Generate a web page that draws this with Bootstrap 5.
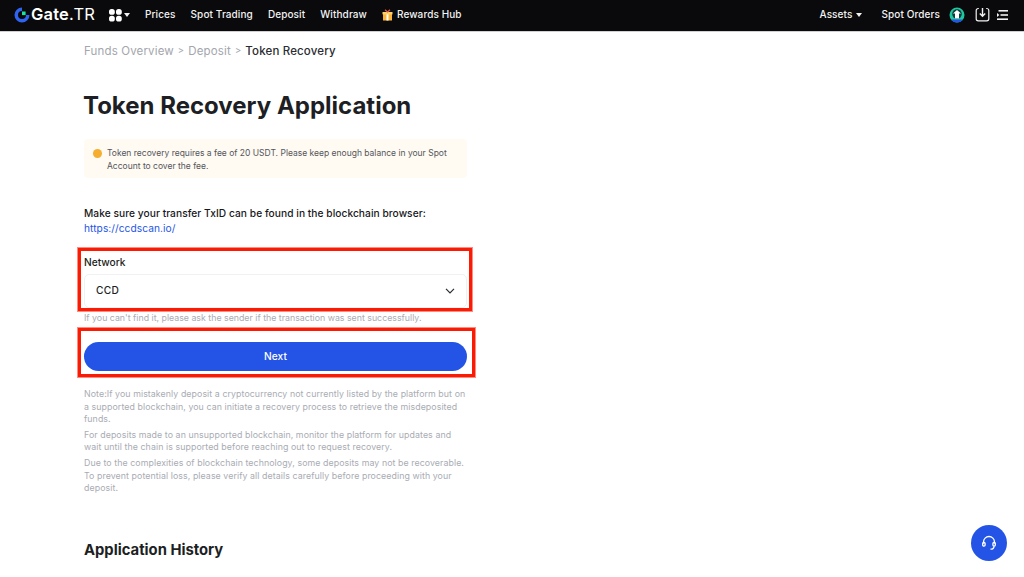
<!DOCTYPE html>
<html lang="en">
  <head>
    <meta charset="UTF-8" />
    <meta name="viewport" content="width=device-width, initial-scale=1.0" />
    <title>Token Recovery</title>
    <link
      href="https://cdn.jsdelivr.net/npm/bootstrap@5.3.5/dist/css/bootstrap.min.css"
      rel="stylesheet"
    />
    <style>
      html,
      body {
        height: 577px;
        overflow: hidden;
      }

      body {
        background: #fff;
        font-family: "Inter", "Liberation Sans", sans-serif;
        color: #1d1f24;
      }

      .top-bar {
        height: 32px;
        background: #0a0a0c;
        color: #f2f2f2;
        font-size: 10px;
        font-weight: 500;
        letter-spacing: 0.1px;
        padding: 0 16px 2px 14px;
        border-bottom: 1px solid #d0d0d0;
      }

      .brand-name {
        font-size: 16.5px;
        font-weight: 600;
        letter-spacing: 0.2px;
        color: #fff;
        margin-left: 1px;
        width: 64px;
      }

      .brand-name span {
        font-weight: 400;
      }

      .nav-left {
        gap: 15px;
      }

      .apps-menu {
        margin-left: -2px;
        gap: 1px;
      }

      .caret-down {
        display: inline-block;
        border-left: 3px solid transparent;
        border-right: 3px solid transparent;
        border-top: 4px solid #f2f2f2;
      }

      .spot-orders {
        margin: 0 9px 0 19px;
      }

      .download-icon {
        margin: 0 7px 0 10px;
      }

      .page-body {
        width: 383px;
        margin-left: 84px;
      }

      .crumbs {
        padding-top: 12px;
        font-size: 11.5px;
        line-height: 14px;
        color: #a3a6ad;
        letter-spacing: 0.15px;
        gap: 4px;
      }

      .crumb-sep {
        font-size: 9.5px;
      }

      .crumbs b {
        font-weight: 500;
        color: #2a2c31;
      }

      .page-title {
        font-size: 24px;
        font-weight: 700;
        line-height: 28px;
        margin: 34px 0 19px -1px;
        letter-spacing: 0;
      }

      .fee-note {
        background: #fffaf2;
        border-radius: 4px;
        padding: 8px 12px 5px 9px;
        font-size: 8.5px;
        line-height: 13px;
        color: #54565c;
        gap: 5px;
      }

      .fee-dot {
        flex: none;
        width: 9px;
        height: 9px;
        margin-top: 2px;
        border-radius: 50%;
        background: #f5ae2f;
      }

      .browser-tip {
        margin-top: 28px;
        font-size: 10.2px;
        font-weight: 500;
        line-height: 15px;
        letter-spacing: 0.05px;
        color: #17181b;
      }

      .browser-tip a {
        color: #2354e6;
        font-weight: 400;
        text-decoration: none;
      }

      .field-label {
        margin-top: 20px;
        font-size: 10.2px;
        font-weight: 500;
        line-height: 13px;
        margin-bottom: 5px;
      }

      .network-select {
        height: 34px;
        border: 1px solid #f0f1f3;
        border-radius: 5px;
        padding: 0 11px;
        font-size: 10.2px;
        font-weight: 500;
        letter-spacing: 0.3px;
      }

      .hint-line {
        margin-top: 4px;
        font-size: 8.8px;
        line-height: 12px;
        color: #a9acb3;
        white-space: nowrap;
      }

      .btn.next-btn {
        display: block;
        width: 100%;
        height: 29px;
        margin-top: 18px;
        padding: 0;
        background: #2354e6;
        border: 0;
        border-radius: 15px;
        color: #fff;
        font-size: 10.2px;
        font-weight: 500;
      }

      .note-block {
        margin-top: 17px;
        font-size: 8.8px;
        line-height: 12.6px;
        letter-spacing: 0.08px;
        color: #a9acb3;
      }

      .note-block p {
        margin: 0 0 3px;
      }

      .history-title {
        margin-top: 45px;
        font-size: 14.8px;
        line-height: 20px;
        font-weight: 700;
      }

      .red-frame {
        position: absolute;
        border: 3px solid #fb1a04;
        box-shadow: 0 0 0 1px rgba(251, 26, 4, 0.5);
        pointer-events: none;
      }

      .frame-a {
        left: 78px;
        top: 248px;
        width: 394px;
        height: 63px;
      }

      .frame-b {
        left: 78px;
        top: 328px;
        width: 397px;
        height: 49px;
      }

      .help-fab {
        position: absolute;
        left: 971px;
        top: 525px;
        width: 36px;
        height: 36px;
        border-radius: 50%;
        background: #2354e6;
      }
    </style>
  </head>

  <body>
    <header class="top-bar d-flex align-items-center justify-content-between">
      <div class="d-flex align-items-center nav-left">
        <div class="d-flex align-items-center">
          <svg width="16" height="16" viewBox="0 0 16 16">
            <path d="M8 .5a7.5 7.5 0 1 0 7.5 7.5H12a4 4 0 1 1-4-4z" fill="#2f63f0" />
            <rect x="8" y="4.5" width="3.6" height="3.6" fill="#17e6a1" />
          </svg>
          <div class="brand-name">Gate<span>.TR</span></div>
        </div>
        <div class="apps-menu d-flex align-items-center">
          <svg width="15" height="14" viewBox="0 0 15 14" fill="#fff">
            <rect x="1" y="1" width="5.8" height="5.8" rx="2.6" />
            <rect x="8" y="1" width="5.8" height="5.8" rx="2.6" />
            <rect x="1" y="7.8" width="5.8" height="5.8" rx="2.6" />
            <rect x="8" y="7.8" width="5.8" height="5.8" rx="2.6" />
          </svg>
          <span class="caret-down"></span>
        </div>
        <span>Prices</span>
        <span>Spot Trading</span>
        <span>Deposit</span>
        <span>Withdraw</span>
        <span class="d-flex align-items-center gap-1">
          <svg width="11" height="12" viewBox="0 0 11 12">
            <rect x="1" y="3" width="9" height="8.5" fill="#fbb437" />
            <rect x="4.5" y="3" width="2" height="8.5" fill="#fff" />
            <rect x="0.5" y="3" width="10" height="2.4" fill="#ffd166" />
            <path d="M5.5 3 3 .8M5.5 3 8 .8" stroke="#e2574c" stroke-width="1.2" />
          </svg>
          Rewards Hub
        </span>
      </div>
      <div class="d-flex align-items-center">
        <span class="d-flex align-items-center gap-1">Assets <span class="caret-down"></span></span>
        <span class="spot-orders">Spot Orders</span>
        <svg width="16" height="16" viewBox="0 0 16 16">
          <circle cx="8" cy="8" r="7.5" fill="#1fc7a0" />
          <circle cx="8" cy="7" r="4.8" fill="#0d3b3a" />
          <path d="M2 12.5a7.5 7.5 0 0 0 12 0z" fill="#2354e6" />
          <path d="M8 3 12 6.6h-2v5H6v-5H4z" fill="#fff" />
        </svg>
        <svg class="download-icon" width="15" height="15" viewBox="0 0 15 15" fill="none" stroke="#f2f2f2" stroke-width="1.2">
          <path d="M3.8 1.5H3.2a2 2 0 0 0-2 2v8.3a2 2 0 0 0 2 2h8.6a2 2 0 0 0 2-2V3.5a2 2 0 0 0-2-2h-.6" />
          <path d="M7.5 1v8M4.8 6.6l2.7 2.7 2.7-2.7" stroke-width="1.4" />
        </svg>
        <svg width="11" height="12" viewBox="0 0 11 12" fill="#f2f2f2">
          <rect x="1.5" y="1" width="9.5" height="1.6" />
          <rect x="3.5" y="5.2" width="7.5" height="1.6" />
          <rect x="0" y="9.4" width="11" height="1.6" />
          <path d="M0 4 2.4 6 0 8z" />
        </svg>
      </div>
    </header>

    <main class="page-body">
      <div class="crumbs d-flex align-items-center">
        <span>Funds Overview</span>
        <span class="crumb-sep">&gt;</span>
        <span>Deposit</span>
        <span class="crumb-sep">&gt;</span>
        <b>Token Recovery</b>
      </div>

      <h1 class="page-title">Token Recovery Application</h1>

      <div class="fee-note d-flex">
        <span class="fee-dot"></span>
        <span>Token recovery requires a fee of 20 USDT. Please keep enough balance in your Spot Account to cover the fee.</span>
      </div>

      <div class="browser-tip">
        Make sure your transfer TxID can be found in the blockchain browser:<br />
        <a href="#">https://ccdscan.io/</a>
      </div>

      <div class="field-label">Network</div>
      <div class="network-select d-flex align-items-center justify-content-between">
        <span>CCD</span>
        <svg width="10" height="6" viewBox="0 0 10 6" fill="none" stroke="#2a2c31" stroke-width="1.2">
          <path d="M1 .8 5 4.8 9 .8" />
        </svg>
      </div>
      <div class="hint-line">If you can't find it, please ask the sender if the transaction was sent successfully.</div>

      <button type="button" class="btn next-btn">Next</button>

      <div class="note-block">
        <p>Note:If you mistakenly deposit a cryptocurrency not currently listed by the platform but on a supported blockchain, you can initiate a recovery process to retrieve the misdeposited funds.</p>
        <p>For deposits made to an unsupported blockchain, monitor the platform for updates and wait until the chain is supported before reaching out to request recovery.</p>
        <p>Due to the complexities of blockchain technology, some deposits may not be recoverable. To prevent potential loss, please verify all details carefully before proceeding with your deposit.</p>
      </div>

      <h2 class="history-title">Application History</h2>
    </main>

    <div class="red-frame frame-a"></div>
    <div class="red-frame frame-b"></div>

    <div class="help-fab d-flex align-items-center justify-content-center">
      <svg width="16" height="16" viewBox="0 0 16 16" fill="none" stroke="#fff" stroke-width="1.3">
        <path d="M2.5 8.5V7a5.5 5.5 0 0 1 11 0v1.5" />
        <rect x="1.7" y="7.5" width="2.4" height="3.6" rx="1.1" />
        <rect x="11.9" y="7.5" width="2.4" height="3.6" rx="1.1" />
        <path d="M13 11.2c0 2-1.5 3-3.5 3" />
      </svg>
    </div>

    <script src="https://cdn.jsdelivr.net/npm/bootstrap@5.3.5/dist/js/bootstrap.bundle.min.js"></script>
  </body>
</html>
